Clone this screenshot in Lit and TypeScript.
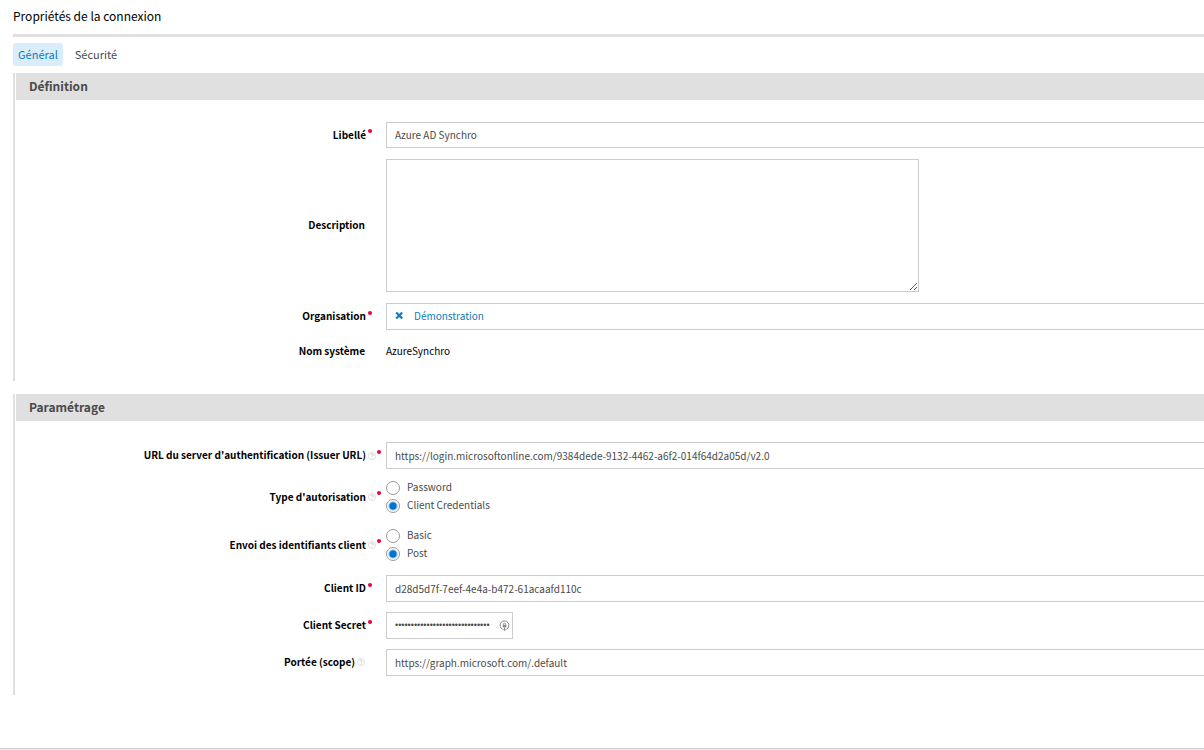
import { LitElement, html, css, svg, nothing } from "lit";
import { customElement, property, state } from "lit/decorators.js";

const sharedText = css`
  * {
    box-sizing: border-box;
  }
  input,
  textarea,
  button {
    font: inherit;
    color: inherit;
    margin: 0;
  }
`;

@customElement("form-row")
class FormRow extends LitElement {
  @property({ type: Boolean }) required = false;
  @property({ type: Boolean }) help = false;

  static styles = [
    sharedText,
    css`
      :host {
        display: grid;
        grid-template-columns: 351px 20px minmax(0, 1fr);
        align-items: center;
      }
      .label {
        display: flex;
        justify-content: flex-end;
        align-items: center;
        gap: 2px;
        padding-bottom: 1px;
        font-weight: 700;
        font-size: 10px;
        line-height: 16px;
        color: #000;
        text-align: right;
      }
      .label.plain {
        padding-right: 1px;
      }
      .marks {
        display: flex;
        align-items: flex-start;
        gap: 1px;
        padding-left: 2px;
        height: 12px;
      }
      .dot {
        width: 4px;
        height: 4px;
        border-radius: 50%;
        background: #ee003c;
      }
      .help {
        display: block;
        width: 8px;
        height: 8px;
      }
      .marks .help {
        margin-top: 2px;
      }
    `,
  ];

  private helpIcon() {
    return html`<svg class="help" viewBox="0 0 8 8" fill="none" stroke="#c4c4c4" role="img" aria-label="Aide">
      ${svg`<circle cx="4" cy="4" r="3.6" stroke="#d4d4d4" stroke-width=".7"></circle>
      <path d="M2.8 3.1a1.2 1.1 0 1 1 1.9 1c-.5.3-.7.4-.7.8M4 5.7v.8" stroke-width=".9"></path>`}
    </svg>`;
  }

  render() {
    return html`
      <span class="label ${this.required ? "" : "plain"}">
        <slot name="label"></slot>
        ${this.help && !this.required ? this.helpIcon() : nothing}
      </span>
      <span class="marks">
        ${this.help && this.required ? this.helpIcon() : nothing}
        ${this.required ? html`<i class="dot"></i>` : nothing}
      </span>
      <slot></slot>
    `;
  }
}

@customElement("app-root")
class AppRoot extends LitElement {
  @state() private grant = "Client Credentials";
  @state() private sending = "Post";

  static styles = [
    sharedText,
    css`
      :host {
        display: block;
        font-family: "Noto Sans CJK JP", "Source Sans Pro", sans-serif;
        font-size: 10px;
        line-height: 16px;
        color: #4a4a4a;
        background: #fff;
      }
      .page {
        display: flex;
        flex-direction: column;
        min-height: 100vh;
        padding-left: 13px;
      }
      h1 {
        margin: 0;
        padding: 6px 0 8px;
        font-size: 12px;
        line-height: 20px;
        font-weight: 400;
        color: #000;
        border-bottom: 3px solid #e0e0e0;
      }
      .tabs {
        display: flex;
        gap: 7px;
        padding: 6px 0 7px;
      }
      .tab {
        border: 0;
        border-radius: 3px;
        background: none;
        padding: 0 5px 2px;
        height: 23px;
        font-size: 11px;
        line-height: 20px;
      }
      .tab.active {
        background: #d9edfb;
        color: #0e7dbd;
      }
      section {
        border-left: 2px solid #e0e0e0;
        margin-bottom: 13px;
      }
      h2 {
        margin: 0 0 0 1px;
        padding-left: 13px;
        height: 27px;
        font-size: 12px;
        line-height: 26px;
        font-weight: 700;
        color: #4a4a4a;
        background: #e0e0e0;
      }
      .rows {
        display: flex;
        flex-direction: column;
        gap: 11px;
        padding: 22px 0 20px;
      }
      .rows.settings {
        gap: 10px;
        padding: 21px 0 19px;
      }
      .field {
        display: block;
        width: 100%;
        height: 26px;
        padding: 0 8px 2px;
        border: 1px solid #ccc;
        border-right: 0;
        border-radius: 0;
        background: #fff;
        outline: 0;
      }
      .settings .field,
      .picker {
        height: 27px;
      }
      .settings .field {
        padding-bottom: 1px;
      }
      .picker {
        display: flex;
        align-items: center;
        gap: 10px;
      }
      .picker a {
        color: #0e7dbd;
        text-decoration: none;
      }
      .clear {
        display: flex;
        border: 0;
        padding: 0;
        background: none;
        color: #0e7dbd;
      }
      .clear svg {
        width: 9px;
        height: 9px;
      }
      textarea {
        display: block;
        width: 533px;
        max-width: 100%;
        height: 133px;
        border: 1px solid #ccc;
        background: #fff;
        outline: 0;
      }
      .value {
        color: #000;
        line-height: 20px;
      }
      .choices {
        margin-bottom: 2px;
      }
      .choice {
        display: flex;
        align-items: center;
        gap: 7px;
        height: 18px;
      }
      .choice span {
        padding-bottom: 2px;
      }
      .choice input {
        appearance: none;
        width: 14px;
        height: 14px;
        border: 1px solid #999;
        border-radius: 50%;
        background: #fff;
      }
      .choice input:checked {
        background: radial-gradient(circle, #0075d0 0 3px, #fff 5px);
      }
      .secret {
        position: relative;
        width: 127px;
      }
      .secret .field {
        border-right: 1px solid #ccc;
        padding-right: 20px;
        font-family: "Liberation Sans", sans-serif;
        font-size: 9px;
      }
      .secret svg {
        position: absolute;
        right: 3px;
        top: 8px;
        width: 11px;
        height: 11px;
      }
      footer {
        margin: auto 0 0 -13px;
        height: 2px;
        background: #e8e8e8;
        border-top: 1px solid #d0d0d0;
      }
    `,
  ];

  private choice(group: string, value: string, current: string, pick: (v: string) => void) {
    return html`<label class="choice">
      <input type="radio" name=${group} .checked=${value === current} @change=${() => pick(value)} />
      <span>${value}</span>
    </label>`;
  }

  render() {
    const setGrant = (v: string) => (this.grant = v);
    const setSending = (v: string) => (this.sending = v);
    return html`
      <main class="page">
        <h1>Propriétés de la connexion</h1>
        <nav class="tabs">
          <button class="tab active" type="button">Général</button>
          <button class="tab" type="button">Sécurité</button>
        </nav>

        <section>
          <h2>Définition</h2>
          <div class="rows">
            <form-row required>
              <label slot="label" for="name">Libellé</label>
              <input class="field" id="name" value="Azure AD Synchro" />
            </form-row>
            <form-row>
              <label slot="label" for="description">Description</label>
              <textarea id="description"></textarea>
            </form-row>
            <form-row required>
              <span slot="label">Organisation</span>
              <div class="field picker">
                <button class="clear" type="button" aria-label="Retirer">
                  <svg viewBox="0 0 9 9" stroke="currentColor" stroke-width="2.2">
                    <path d="M1.2 1.5l6 6M7.2 1.5l-6 6"></path>
                  </svg>
                </button>
                <a href="#organisation">Démonstration</a>
              </div>
            </form-row>
            <form-row>
              <span slot="label">Nom système</span>
              <span class="value">AzureSynchro</span>
            </form-row>
          </div>
        </section>

        <section>
          <h2>Paramétrage</h2>
          <div class="rows settings">
            <form-row required help>
              <label slot="label" for="issuer">URL du server d'authentification (Issuer URL)</label>
              <input
                class="field"
                id="issuer"
                value="https://login.microsoftonline.com/9384dede-9132-4462-a6f2-014f64d2a05d/v2.0"
              />
            </form-row>
            <form-row class="choices" required help>
              <span slot="label" id="grant-label">Type d'autorisation</span>
              <div role="radiogroup" aria-labelledby="grant-label">
                ${["Password", "Client Credentials"].map((v) => this.choice("grant", v, this.grant, setGrant))}
              </div>
            </form-row>
            <form-row class="choices" required help>
              <span slot="label" id="sending-label">Envoi des identifiants client</span>
              <div role="radiogroup" aria-labelledby="sending-label">
                ${["Basic", "Post"].map((v) => this.choice("sending", v, this.sending, setSending))}
              </div>
            </form-row>
            <form-row required>
              <label slot="label" for="client-id">Client ID</label>
              <input class="field" id="client-id" value="d28d5d7f-7eef-4e4a-b472-61acaafd110c" />
            </form-row>
            <form-row required>
              <label slot="label" for="client-secret">Client Secret</label>
              <div class="secret">
                <input class="field" id="client-secret" type="password" value="abcdefghijklmnopqrstuvwxyz0123" />
                <svg viewBox="0 0 11 11" fill="none" stroke="#8a8a8a" aria-hidden="true">
                  <path d="M3.6 9.3A4.4 4.4 0 1 1 7.4 9.3M5.5 7.6v3M4.2 9.4l1.3 1.3 1.3-1.3"></path>
                  <path d="M4.4 5V4.2a1.1 1.1 0 0 1 2.2 0V5" stroke-width=".8"></path>
                  <path d="M3.7 4.8h3.6v2.6H3.7z" fill="#8a8a8a" stroke="none"></path>
                </svg>
              </div>
            </form-row>
            <form-row help>
              <label slot="label" for="scope">Portée (scope)</label>
              <input class="field" id="scope" value="https://graph.microsoft.com/.default" />
            </form-row>
          </div>
        </section>
        <footer></footer>
      </main>
    `;
  }
}
